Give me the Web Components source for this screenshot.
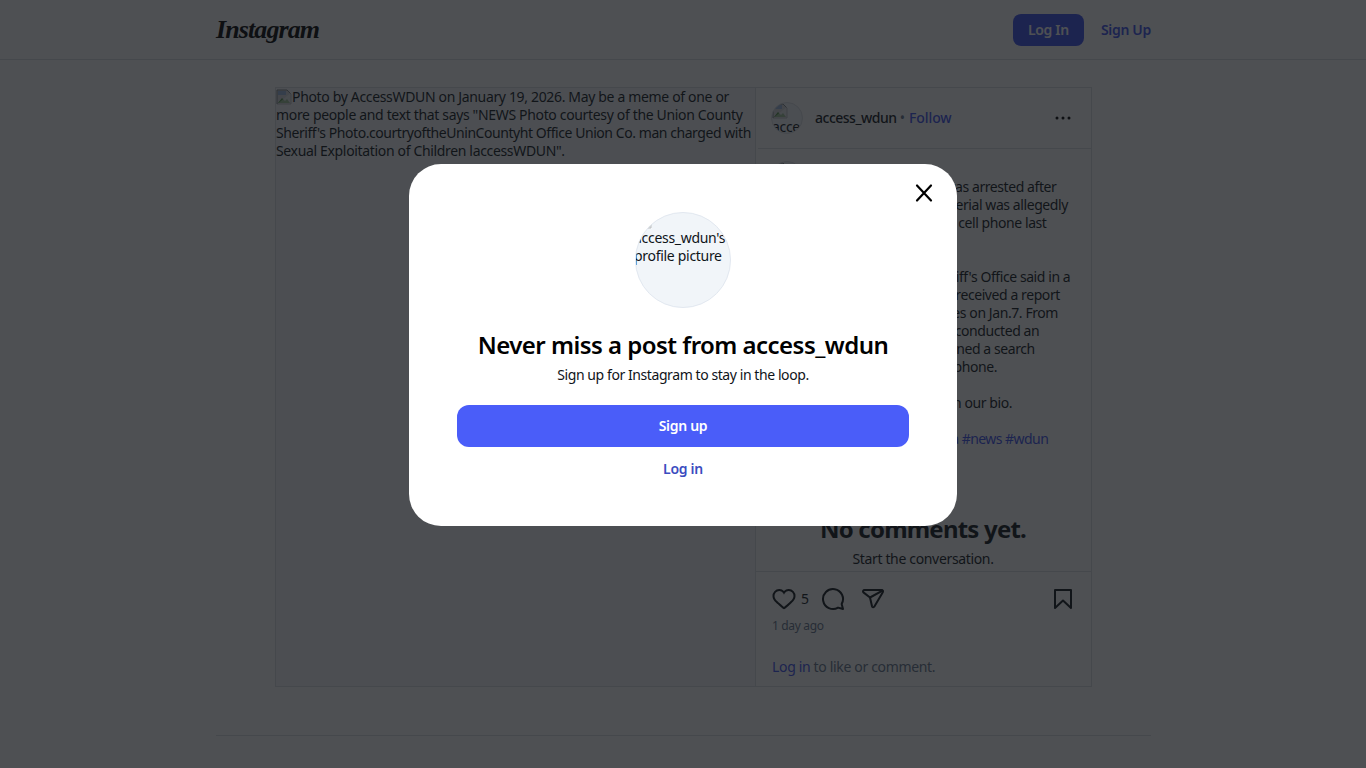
<!DOCTYPE html>
<html lang="en">
<head>
<meta charset="utf-8">
<title>access_wdun on Instagram</title>
<style>
  html, body { margin: 0; height: 100%; overflow: hidden; }
  body { background: #fff; color: #0f1419; font: 14px/18px "Noto Sans", "Open Sans", sans-serif; }
</style>
</head>
<body>
<ig-header></ig-header>
<ig-post></ig-post>
<ig-footer></ig-footer>
<ig-signup-modal></ig-signup-modal>

<script>
const brokenImg = `<svg class="broken" width="16" height="16" viewBox="0 0 16 16"><path d="M1 1h10l4 4v10H1z" fill="#d5d8dc" stroke="#80868b"/><path d="M2 14l4-5 3 3 2-2 3 4z" fill="#4f8f45"/><path d="M2 2h8v4H2z" fill="#9db8e0"/><path d="M0 16L16 3v13z" fill="#fff" opacity=".45"/></svg>`;

class IgHeader extends HTMLElement {
  constructor() {
    super();
    this.shadowDOM = this.attachShadow({ mode: "open" });
    this.shadowDOM.innerHTML = `
      <style>
      :host { display: block; border-bottom: 1px solid #dbdfe4; }
      .inner {
        width: 936px;
        height: 59px;
        margin: 0 auto;
        padding-left: 1px;
        box-sizing: border-box;
        display: flex;
        align-items: center;
        justify-content: space-between;
      }
      .logo {
        font: italic 700 26px/1 "Liberation Serif", serif;
        color: #000;
        letter-spacing: -0.9px;
      }
      .actions { display: flex; align-items: center; gap: 17px; }
      button {
        width: 71px;
        height: 32px;
        border: 0;
        border-radius: 8px;
        background: #3b4ff0;
        color: #fff;
        font: 600 14px "Noto Sans", sans-serif;
        letter-spacing: -0.3px;
        padding: 0;
      }
      a { color: #3b4ff0; font-weight: 600; letter-spacing: -0.3px; text-decoration: none; }
      </style>
      <div class="inner">
        <span class="logo">Instagram</span>
        <div class="actions">
          <button>Log In</button>
          <a href="#">Sign Up</a>
        </div>
      </div>`;
  }
}
customElements.define("ig-header", IgHeader);

class IgPost extends HTMLElement {
  constructor() {
    super();
    this.shadowDOM = this.attachShadow({ mode: "open" });
    this.shadowDOM.innerHTML = `
      <style>
      * { box-sizing: border-box; }
      :host {
        display: flex;
        width: 817px;
        height: 600px;
        margin: 27px 0 0 275px;
        border: 1px solid #dbdfe4;
        box-sizing: border-box;
        letter-spacing: -0.34px;
      }
      .photo {
        width: 479px;
        flex: none;
        background: #f6f8fa;
        overflow: hidden;
        white-space: nowrap;
      }
      .photo span { letter-spacing: -0.44px; }
      .broken { vertical-align: -3px; }
      .side {
        flex: 1;
        min-width: 0;
        display: flex;
        flex-direction: column;
        border-left: 1px solid #dbdfe4;
      }
      .top {
        height: 61px;
        flex: none;
        display: flex;
        align-items: center;
        gap: 12px;
        padding: 0 16px 2px 15px;
        position: relative;
      }
      .top::after {
        content: "";
        position: absolute;
        left: 2px; right: 0; bottom: 0;
        border-bottom: 1px solid #dbdfe4;
      }
      .avatar {
        width: 32px;
        height: 32px;
        border-radius: 50%;
        background: #f1f5f9;
        border: 1px solid #dbdfe4;
        overflow: hidden;
        flex: none;
        font-size: 14px;
        line-height: 16px;
        white-space: nowrap;
      }
      .name { font-weight: 500; color: #0f1419; letter-spacing: -0.5px; }
      .dot { color: #64748b; margin: 0 1px 0 0; }
      .follow { color: #3b4ff0; font-weight: 500; text-decoration: none; letter-spacing: -0.1px; }
      .more { margin-left: auto; display: flex; }
      .scroll {
        flex: 1;
        min-height: 0;
        overflow: hidden;
        padding: 12px 16px 0 15px;
        border-bottom: 1px solid #dbdfe4;
      }
      .caption { display: flex; gap: 12px; letter-spacing: -0.42px; }
      .caption p { margin: 0; padding-top: 17px; white-space: nowrap; flex: 1; }
      .tags { color: #3b4ff0; letter-spacing: -0.55px; }
      .empty { text-align: center; padding-top: 66px; }
      .empty h2 { margin: 0 0 6px; font-size: 24px; line-height: 30px; font-weight: 700; letter-spacing: -0.8px; }
      .empty div { line-height: 18px; }
      .foot { height: 114px; flex: none; padding: 15px 16px 0; }
      .icons { display: flex; align-items: center; height: 24px; }
      .icons svg { display: block; }
      .count { margin: 0 12px 0 5px; }
      .share { margin-left: 16px; }
      .save { margin-left: auto; }
      .time { font-size: 12px; line-height: 16px; color: #64748b; margin-top: 7px; }
      .login { margin-top: 24px; color: #64748b; }
      .login a { color: #3b4ff0; text-decoration: none; }
      </style>
      <div class="photo">${brokenImg}Photo by AccessWDUN on January 19, 2026. May be a meme of one or<br>more people and text that says "NEWS Photo courtesy of the Union County<br><span>Sheriff's Photo.courtryoftheUninCountyht Office Union Co. man charged with</span><br>Sexual Exploitation of Children laccessWDUN".</div>
      <div class="side">
        <div class="top">
          <div class="avatar">${brokenImg}<br>acce</div>
          <div><span class="name">access_wdun</span> <span class="dot">•</span> <a class="follow" href="#">Follow</a></div>
          <svg class="more" width="24" height="24" viewBox="0 0 24 24" fill="#000"><circle cx="6" cy="12" r="1.5"/><circle cx="12" cy="12" r="1.5"/><circle cx="18" cy="12" r="1.5"/></svg>
        </div>
        <div class="scroll">
          <div class="caption">
            <div class="avatar">${brokenImg}</div>
            <p>A Union county man was arrested after
<br>child sexual abuse material was allegedly
<br>which was found in his cell phone last
<br>week.
<br>&nbsp;
<br>The Union county Sheriff's Office said in a
<br>statement that agents received a report
<br>about the sexual images on Jan.7. From
<br>and how investigators conducted an
<br>investigation and obtained a search
<br>warrant for this man's phone.
<br>&nbsp;
<br>Read more at the link in our bio.
<br>&nbsp;
<br><span class="tags">#unioncounty #georgia #news #wdun</span></p>
          </div>
          <div class="empty">
            <h2>No comments yet.</h2>
            <div>Start the conversation.</div>
          </div>
        </div>
        <div class="foot">
          <div class="icons">
            <svg width="24" height="24" viewBox="0 0 24 24" fill="#0f1419"><path d="M16.792 3.904A4.989 4.989 0 0 1 21.5 9.122c0 3.072-2.652 4.959-5.197 7.222-2.512 2.243-3.865 3.469-4.303 3.752-.477-.309-2.143-1.823-4.303-3.752C5.141 14.072 2.5 12.167 2.5 9.122a4.989 4.989 0 0 1 4.708-5.218 4.21 4.21 0 0 1 3.675 1.941c.84 1.175.98 1.763 1.12 1.763s.278-.588 1.11-1.766a4.17 4.17 0 0 1 3.679-1.938m0-2a6.04 6.04 0 0 0-4.797 2.127 6.052 6.052 0 0 0-4.787-2.127A6.985 6.985 0 0 0 .5 9.122c0 3.61 2.55 5.827 5.015 7.97.283.246.569.494.853.747l1.027.918a44.998 44.998 0 0 0 3.518 3.018 2 2 0 0 0 2.174 0 45.263 45.263 0 0 0 3.626-3.115l.922-.824c.293-.26.59-.519.885-.774 2.334-2.025 4.98-4.32 4.98-7.94a6.985 6.985 0 0 0-6.708-7.218Z"/></svg>
            <span class="count">5</span>
            <svg width="24" height="24" viewBox="0 0 24 24" fill="none" stroke="#0f1419" stroke-width="2" stroke-linejoin="round"><path d="M20.656 17.008a9.993 9.993 0 1 0-3.59 3.615L22 22Z"/></svg>
            <svg class="share" width="24" height="24" viewBox="0 0 24 24" fill="none" stroke="#0f1419" stroke-width="2" stroke-linejoin="round" stroke-linecap="round"><path d="M3.5 3h17c1.2 0 1.9 1.3 1.3 2.3L13.4 19.6c-.6 1-2.1.8-2.4-.3L9 10.5 2.4 5.4C1.5 4.5 2.2 3 3.5 3Z"/><path d="M21.5 3.6 9 10.5"/></svg>
            <svg class="save" width="24" height="24" viewBox="0 0 24 24" fill="none" stroke="#0f1419" stroke-width="2" stroke-linejoin="round" stroke-linecap="round"><polygon points="20 21 12 13.44 4 21 4 3 20 3 20 21"/></svg>
          </div>
          <div class="time">1 day ago</div>
          <div class="login"><a href="#">Log in</a> to like or comment.</div>
        </div>
      </div>`;
  }
}
customElements.define("ig-post", IgPost);

class IgFooter extends HTMLElement {
  constructor() {
    super();
    this.attachShadow({ mode: "open" }).innerHTML = `
      <style>
      :host { display: block; width: 935px; margin: 48px auto 0; border-top: 1px solid #dbdfe4; height: 20px; }
      </style>`;
  }
}
customElements.define("ig-footer", IgFooter);

class IgSignupModal extends HTMLElement {
  constructor() {
    super();
    this.shadowDOM = this.attachShadow({ mode: "open" });
    this.shadowDOM.innerHTML = `
      <style>
      * { box-sizing: border-box; }
      :host {
        position: fixed;
        inset: 0;
        display: flex;
        justify-content: center;
        align-items: flex-start;
        padding-top: 164px;
        background: rgba(19, 22, 25, 0.75);
      }
      .box {
        width: 548px;
        height: 362px;
        background: #fff;
        border-radius: 32px;
        padding: 48px;
        position: relative;
        display: flex;
        flex-direction: column;
        align-items: center;
        letter-spacing: -0.42px;
      }
      .close {
        position: absolute;
        top: 17px; right: 21px;
        width: 24px; height: 24px;
        border: 0; background: none; padding: 0;
      }
      .close svg { display: block; }
      .avatar {
        width: 96px;
        height: 96px;
        flex: none;
        border-radius: 50%;
        background: #f1f5f9;
        border: 1px solid #e2e8f0;
        overflow: hidden;
        text-align: left;
        color: #0f1419;
      }
      .avatar div { margin-left: -2px; letter-spacing: -0.3px; }
      .broken { display: block; }
      h2 {
        margin: 20px 0 0;
        font-size: 24px;
        line-height: 34px;
        font-weight: 600;
        color: #000;
        letter-spacing: -0.53px;
      }
      p { margin: 3px 0 0; line-height: 20px; color: #0f1419; }
      .primary {
        width: 100%;
        height: 42px;
        flex: none;
        margin-top: 20px;
        padding: 0 0 2px;
        border: 0;
        border-radius: 12px;
        background: #4a5df9;
        color: #fff;
        font: 600 14px "Noto Sans", sans-serif;
        letter-spacing: -0.3px;
      }
      a {
        margin-top: 13px;
        line-height: 18px;
        color: #3b4cc0;
        font-weight: 600;
        letter-spacing: -0.3px;
        text-decoration: none;
      }
      </style>
      <div class="box">
        <button class="close" aria-label="Close"><svg width="24" height="24" viewBox="0 0 24 24" fill="none" stroke="#000" stroke-width="2.2" stroke-linecap="round"><path d="M5 4.5 19 19.5M19 4.5 5 19.5"/></svg></button>
        <div class="avatar">${brokenImg}<div>access_wdun's profile picture</div></div>
        <h2>Never miss a post from access_wdun</h2>
        <p>Sign up for Instagram to stay in the loop.</p>
        <button class="primary">Sign up</button>
        <a href="#">Log in</a>
      </div>`;
  }
}
customElements.define("ig-signup-modal", IgSignupModal);
</script>
</body>
</html>
